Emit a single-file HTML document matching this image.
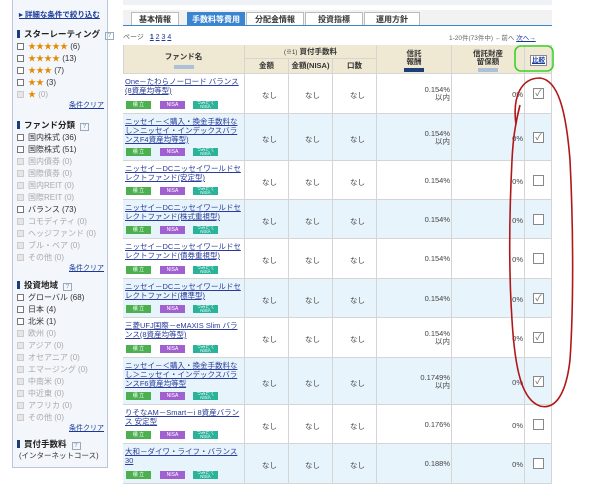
<!DOCTYPE html>
<html><head><meta charset="utf-8"><style>
*{margin:0;padding:0;box-sizing:border-box}
body{width:600px;height:459px;overflow:hidden;background:#fff;font-family:"Liberation Sans","Noto Sans CJK JP",sans-serif;font-size:8px;color:#333;position:relative}
.a{position:absolute;white-space:nowrap}
#side{position:absolute;left:12px;top:-2px;width:96px;height:470px;background:#f3f6fa;border:1px solid #b8c6d8}
.h{font-weight:bold;font-size:8.5px;color:#222}
.h:before{content:"";display:inline-block;width:3px;height:8px;background:#1c3d7a;margin-right:4px;vertical-align:-1px}
.q{display:inline-block;width:9px;height:8px;border:1px solid #9ab;font-size:6px;color:#9ab;text-align:center;line-height:6px;margin-left:5px;vertical-align:0}
.cb{display:inline-block;width:7px;height:7px;border:1px solid #777;background:#fff;margin-right:4px;vertical-align:-1px}
.dis{color:#aaa}.dis .cb{border-color:#ccc;background:#e6e6e6}
.st{color:#e38a00}
.lk{color:#1a3a9a;text-decoration:underline}
.tab{position:absolute;top:12px;height:14px;border:1px solid #bbb;border-bottom:none;background:#fff;font-size:8px;font-weight:bold;text-align:center;line-height:13px;color:#333}
.c{position:absolute;border-right:1px solid #d5d5d5;border-bottom:1px solid #d5d5d5}
.hd{background:#efe9d4;font-weight:bold;text-align:center;font-size:7.5px;color:#333}
.sb{display:inline-block;width:20px;height:4px;background:#aebfd8;margin-top:2px}
.fn{font-size:7.5px;color:#2a3d9a;text-decoration:underline;line-height:9px;position:absolute;left:2px;top:4px;width:119px;white-space:normal}
.bd{position:absolute;height:8px;font-size:5px;color:#fff;text-align:center;line-height:8px}
.b1{background:#4caf50;width:25px}.b2{background:#a160d0;width:25px}.b3{background:#2bb39a;width:25px;font-size:4.5px;line-height:4px}
.nv{position:absolute;font-size:7.5px;color:#444}
.box{position:absolute;width:11px;height:11px;border:1px solid #888;background:#fff;font-size:9px;line-height:9px;text-align:center;color:#666}
</style></head><body>
<div id="side">
<div class="a lk" style="left:6px;top:10px;font-weight:bold;font-size:7.5px">▸ 詳細な条件で絞り込む</div>
<div class="a h" style="left:4px;top:29px">スターレーティング<span class="q">?</span></div>
<div class="a" style="left:4px;top:42px"><span class="cb"></span><span class="st">★★★★★</span> (6)</div>
<div class="a" style="left:4px;top:54px"><span class="cb"></span><span class="st">★★★★</span> (13)</div>
<div class="a" style="left:4px;top:66px"><span class="cb"></span><span class="st">★★★</span> (7)</div>
<div class="a" style="left:4px;top:78px"><span class="cb"></span><span class="st">★★</span> (3)</div>
<div class="a dis" style="left:4px;top:90px"><span class="cb"></span><span class="st">★</span> (0)</div>
<div class="a lk" style="right:3px;top:101px;font-size:7px">条件クリア</div>
<div class="a h" style="left:4px;top:120px">ファンド分類<span class="q">?</span></div>
<div class="a" style="left:4px;top:133px"><span class="cb"></span>国内株式 (36)</div>
<div class="a" style="left:4px;top:145px"><span class="cb"></span>国際株式 (51)</div>
<div class="a dis" style="left:4px;top:157px"><span class="cb"></span>国内債券 (0)</div>
<div class="a dis" style="left:4px;top:169px"><span class="cb"></span>国際債券 (0)</div>
<div class="a dis" style="left:4px;top:181px"><span class="cb"></span>国内REIT (0)</div>
<div class="a dis" style="left:4px;top:193px"><span class="cb"></span>国際REIT (0)</div>
<div class="a" style="left:4px;top:205px"><span class="cb"></span>バランス (73)</div>
<div class="a dis" style="left:4px;top:217px"><span class="cb"></span>コモディティ (0)</div>
<div class="a dis" style="left:4px;top:229px"><span class="cb"></span>ヘッジファンド (0)</div>
<div class="a dis" style="left:4px;top:241px"><span class="cb"></span>ブル・ベア (0)</div>
<div class="a dis" style="left:4px;top:253px"><span class="cb"></span>その他 (0)</div>
<div class="a lk" style="right:3px;top:264px;font-size:7px">条件クリア</div>
<div class="a h" style="left:4px;top:280px">投資地域<span class="q">?</span></div>
<div class="a" style="left:4px;top:293px"><span class="cb"></span>グローバル (68)</div>
<div class="a" style="left:4px;top:305px"><span class="cb"></span>日本 (4)</div>
<div class="a" style="left:4px;top:317px"><span class="cb"></span>北米 (1)</div>
<div class="a dis" style="left:4px;top:329px"><span class="cb"></span>欧州 (0)</div>
<div class="a dis" style="left:4px;top:341px"><span class="cb"></span>アジア (0)</div>
<div class="a dis" style="left:4px;top:353px"><span class="cb"></span>オセアニア (0)</div>
<div class="a dis" style="left:4px;top:365px"><span class="cb"></span>エマージング (0)</div>
<div class="a dis" style="left:4px;top:377px"><span class="cb"></span>中南米 (0)</div>
<div class="a dis" style="left:4px;top:389px"><span class="cb"></span>中近東 (0)</div>
<div class="a dis" style="left:4px;top:401px"><span class="cb"></span>アフリカ (0)</div>
<div class="a dis" style="left:4px;top:413px"><span class="cb"></span>その他 (0)</div>
<div class="a lk" style="right:3px;top:424px;font-size:7px">条件クリア</div>
<div class="a h" style="left:4px;top:439px">買付手数料<span class="q">?</span></div>
<div class="a" style="left:6px;top:451px;font-size:7.5px">(インターネットコース)</div>
</div>

<div class="a" style="left:123px;top:0;width:429px;height:5px;background:#eef2f6"></div>
<div class="a" style="left:123px;top:10px;width:429px;height:16px;background:#f2f2f2"></div>
<div class="tab" style="left:131px;width:48px">基本情報</div>
<div class="tab" style="left:187px;width:58px;background:#3a84d0;color:#fff;border-color:#3a84d0">手数料等費用</div>
<div class="tab" style="left:246px;width:58px">分配金情報</div>
<div class="tab" style="left:305px;width:58px">投資指標</div>
<div class="tab" style="left:364px;width:56px">運用方針</div>
<div class="a" style="left:123px;top:25px;width:429px;height:1px;background:#3a84d0"></div>
<div class="a" style="left:123px;top:32px;font-size:7px;color:#666">ページ <b class="lk" style="color:#1a3a9a;margin-left:4px">1</b> <span class="lk">2</span> <span class="lk">3</span> <span class="lk">4</span></div>
<div class="a" style="left:449px;top:32px;font-size:6.5px;color:#666">1-20件(73件中) ←前へ <span class="lk">次へ→</span></div>

<div class="c hd" style="left:123px;top:45px;width:122px;height:29px;padding-top:6px">ファンド名<br><span class="sb"></span></div>
<div class="c hd" style="left:245px;top:45px;width:132px;height:14px;line-height:13px"><span style="font-weight:normal;font-size:6px">(※1)</span> 買付手数料</div>
<div class="c hd" style="left:245px;top:59px;width:44px;height:15px;padding-top:1px">金額<br><span class="sb"></span></div>
<div class="c hd" style="left:289px;top:59px;width:44px;height:15px;padding-top:1px">金額(NISA)<br><span class="sb"></span></div>
<div class="c hd" style="left:333px;top:59px;width:44px;height:15px;padding-top:1px">口数<br><span class="sb"></span></div>
<div class="c hd" style="left:377px;top:45px;width:75px;height:29px;padding-top:5px;line-height:8px">信託<br>報酬<br><span class="sb" style="background:#1c3d7a"></span></div>
<div class="c hd" style="left:452px;top:45px;width:73px;height:29px;padding-top:5px;line-height:8px">信託財産<br>留保額<br><span class="sb"></span></div>
<div class="c hd" style="left:525px;top:45px;width:27px;height:29px"><div style="position:absolute;left:5px;top:10px;width:17px;height:11px;border:1px solid #889;background:#fff;font-size:6.5px;line-height:9px;color:#1a3a9a;text-decoration:underline">比較</div></div>
<div class="a" style="left:123px;top:45px;width:1px;height:420px;background:#d5d5d5"></div>

<div id="rows"></div>
<script>
var R=[[74,114,"One－たわらノーロード バランス(8資産均等型)","0.154%","以内",1],
[114,161,"ニッセイ－＜購入・換金手数料なし＞ニッセイ・インデックスバランスF4資産均等型)","0.154%","以内",1],
[161,200,"ニッセイ－DCニッセイワールドセレクトファンド(安定型)","0.154%","",0],
[200,239,"ニッセイ－DCニッセイワールドセレクトファンド(株式重視型)","0.154%","",0],
[239,279,"ニッセイ－DCニッセイワールドセレクトファンド(債券重視型)","0.154%","",0],
[279,318,"ニッセイ－DCニッセイワールドセレクトファンド(標準型)","0.154%","",1],
[318,358,"三菱UFJ国際－eMAXIS Slim バランス(8資産均等型)","0.154%","以内",1],
[358,405,"ニッセイ－＜購入・換金手数料なし＞ニッセイ・インデックスバランスF6資産均等型","0.1749%","以内",1],
[405,444,"りそなAM－Smart－i 8資産バランス 安定型","0.176%","",0],
[444,484,"大和－ダイワ・ライフ・バランス30","0.188%","",0]];
var h="";
R.forEach(function(r,i){var t=r[0],H=r[1]-r[0],bg=i%2?"#e8f4fc":"#fff";
var cols=[[123,122],[245,44],[289,44],[333,44],[377,75],[452,73],[525,27]];
cols.forEach(function(c){h+='<div class="c" style="left:'+c[0]+'px;top:'+t+'px;width:'+c[1]+'px;height:'+H+'px;background:'+bg+'"></div>';});
h+='<div class="fn" style="left:125px;top:'+(t+3)+'px">'+r[2]+'</div>';
var by=r[1]-13;
h+='<div class="bd b1" style="left:126px;top:'+by+'px">積 立</div><div class="bd b2" style="left:160px;top:'+by+'px">NISA</div><div class="bd b3" style="left:193px;top:'+by+'px">つみたて<br>NISA</div>';
var my=t+H/2-4;
[262,305,350].forEach(function(x){h+='<div class="nv" style="left:'+x+'px;top:'+my+'px">なし</div>';});
h+='<div class="nv" style="right:'+(600-450)+'px;top:'+(r[4]?my-4:my)+'px;text-align:right;line-height:8px">'+r[3]+(r[4]?'<br>'+r[4]:'')+'</div>';
h+='<div class="nv" style="right:'+(600-523)+'px;top:'+my+'px">0%</div>';
h+='<div class="box" style="left:533px;top:'+(my-2)+'px">'+(r[5]?'✓':'')+'</div>';
});
document.getElementById("rows").innerHTML=h;
</script>

<svg class="a" style="left:0;top:0" width="600" height="459">
<rect x="515" y="46" width="38" height="25" rx="6" fill="none" stroke="#3dd12a" stroke-width="1.6"/>
<path d="M516 125 C512 95 522 78 540 78 C558 80 566 110 570 160 C573 220 574 300 570 360 C566 395 555 410 540 406 C522 400 515 370 512 320 C508 260 510 200 512 160 C513 140 515 125 520 105" fill="none" stroke="#b01818" stroke-width="1.6"/>
</svg>
</body></html>
